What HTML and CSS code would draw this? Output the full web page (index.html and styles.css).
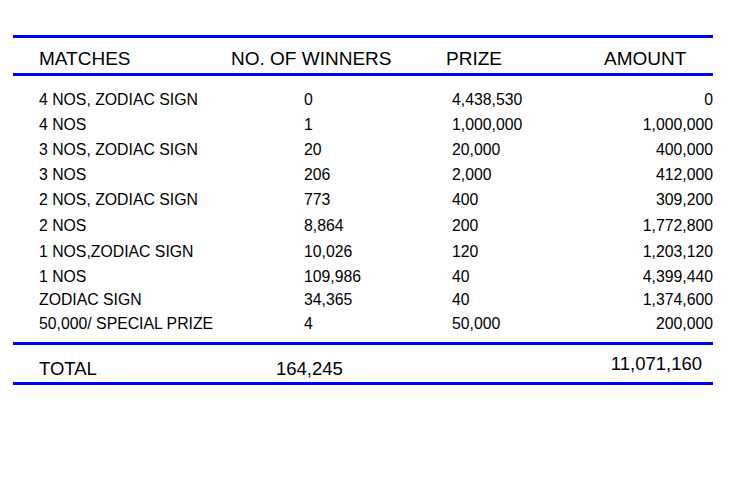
FILE: index.html
```html
<!DOCTYPE html>
<html>
<head>
<meta charset="utf-8">
<link rel="stylesheet" href="styles.css">
</head>
<body>
<div class="table">
  <div class="row head">
    <div class="c1">MATCHES</div>
    <div class="c2">NO. OF WINNERS</div>
    <div class="c3">PRIZE</div>
    <div class="c4">AMOUNT</div>
  </div>
  <div class="data">
    <div class="row drow"><div class="c1">4 NOS, ZODIAC SIGN</div><div class="c2">0</div><div class="c3">4,438,530</div><div class="c4">0</div></div>
    <div class="row drow"><div class="c1">4 NOS</div><div class="c2">1</div><div class="c3">1,000,000</div><div class="c4">1,000,000</div></div>
    <div class="row drow"><div class="c1">3 NOS, ZODIAC SIGN</div><div class="c2">20</div><div class="c3">20,000</div><div class="c4">400,000</div></div>
    <div class="row drow"><div class="c1">3 NOS</div><div class="c2">206</div><div class="c3">2,000</div><div class="c4">412,000</div></div>
    <div class="row drow h26"><div class="c1">2 NOS, ZODIAC SIGN</div><div class="c2">773</div><div class="c3">400</div><div class="c4">309,200</div></div>
    <div class="row drow h26"><div class="c1">2 NOS</div><div class="c2">8,864</div><div class="c3">200</div><div class="c4">1,772,800</div></div>
    <div class="row drow"><div class="c1">1 NOS,ZODIAC SIGN</div><div class="c2">10,026</div><div class="c3">120</div><div class="c4">1,203,120</div></div>
    <div class="row drow h23"><div class="c1">1 NOS</div><div class="c2">109,986</div><div class="c3">40</div><div class="c4">4,399,440</div></div>
    <div class="row drow h24"><div class="c1">ZODIAC SIGN</div><div class="c2">34,365</div><div class="c3">40</div><div class="c4">1,374,600</div></div>
    <div class="row drow"><div class="c1">50,000/ SPECIAL PRIZE</div><div class="c2">4</div><div class="c3">50,000</div><div class="c4">200,000</div></div>
  </div>
  <div class="row total">
    <div class="c1">TOTAL</div>
    <div class="c2">164,245</div>
    <div class="c3"></div>
    <div class="c4">11,071,160</div>
  </div>
</div>
</body>
</html>
```
FILE: styles.css
```css
body {
  margin: 0;
  background: #fff;
  color: #000;
  font-family: "Liberation Sans", Arial, sans-serif;
}
.table {
  width: 700px;
  margin: 35px 0 0 13px;
}
.row {
  display: grid;
  grid-template-columns: 218px 215px 158px 109px;
  white-space: nowrap;
}
.c1 {
  padding-left: 26px;
}
.head {
  border-top: 3px solid #0000ff;
  border-bottom: 3px solid #0000ff;
  font-size: 19px;
  line-height: 29px;
  padding-top: 6px;
  height: 29px;
}
.data {
  padding: 11px 0 6px;
}
.drow {
  font-size: 15.8px;
  line-height: 25px;
  height: 25px;
}
.drow.h26 { height: 26px; }
.drow.h24 { height: 24px; }
.drow.h23 { height: 23px; }
.drow .c2 { padding-left: 73px; }
.drow .c3 { padding-left: 6px; }
.drow .c4 { text-align: right; }
.total {
  border-top: 3px solid #0000ff;
  border-bottom: 3px solid #0000ff;
  font-size: 18.5px;
  line-height: 26px;
  padding-top: 11px;
  height: 26px;
  align-items: start;
}
.total .c2 { padding-left: 45px; }
.total .c4 {
  text-align: right;
  padding-right: 11px;
  margin-top: -5px;
}
```
